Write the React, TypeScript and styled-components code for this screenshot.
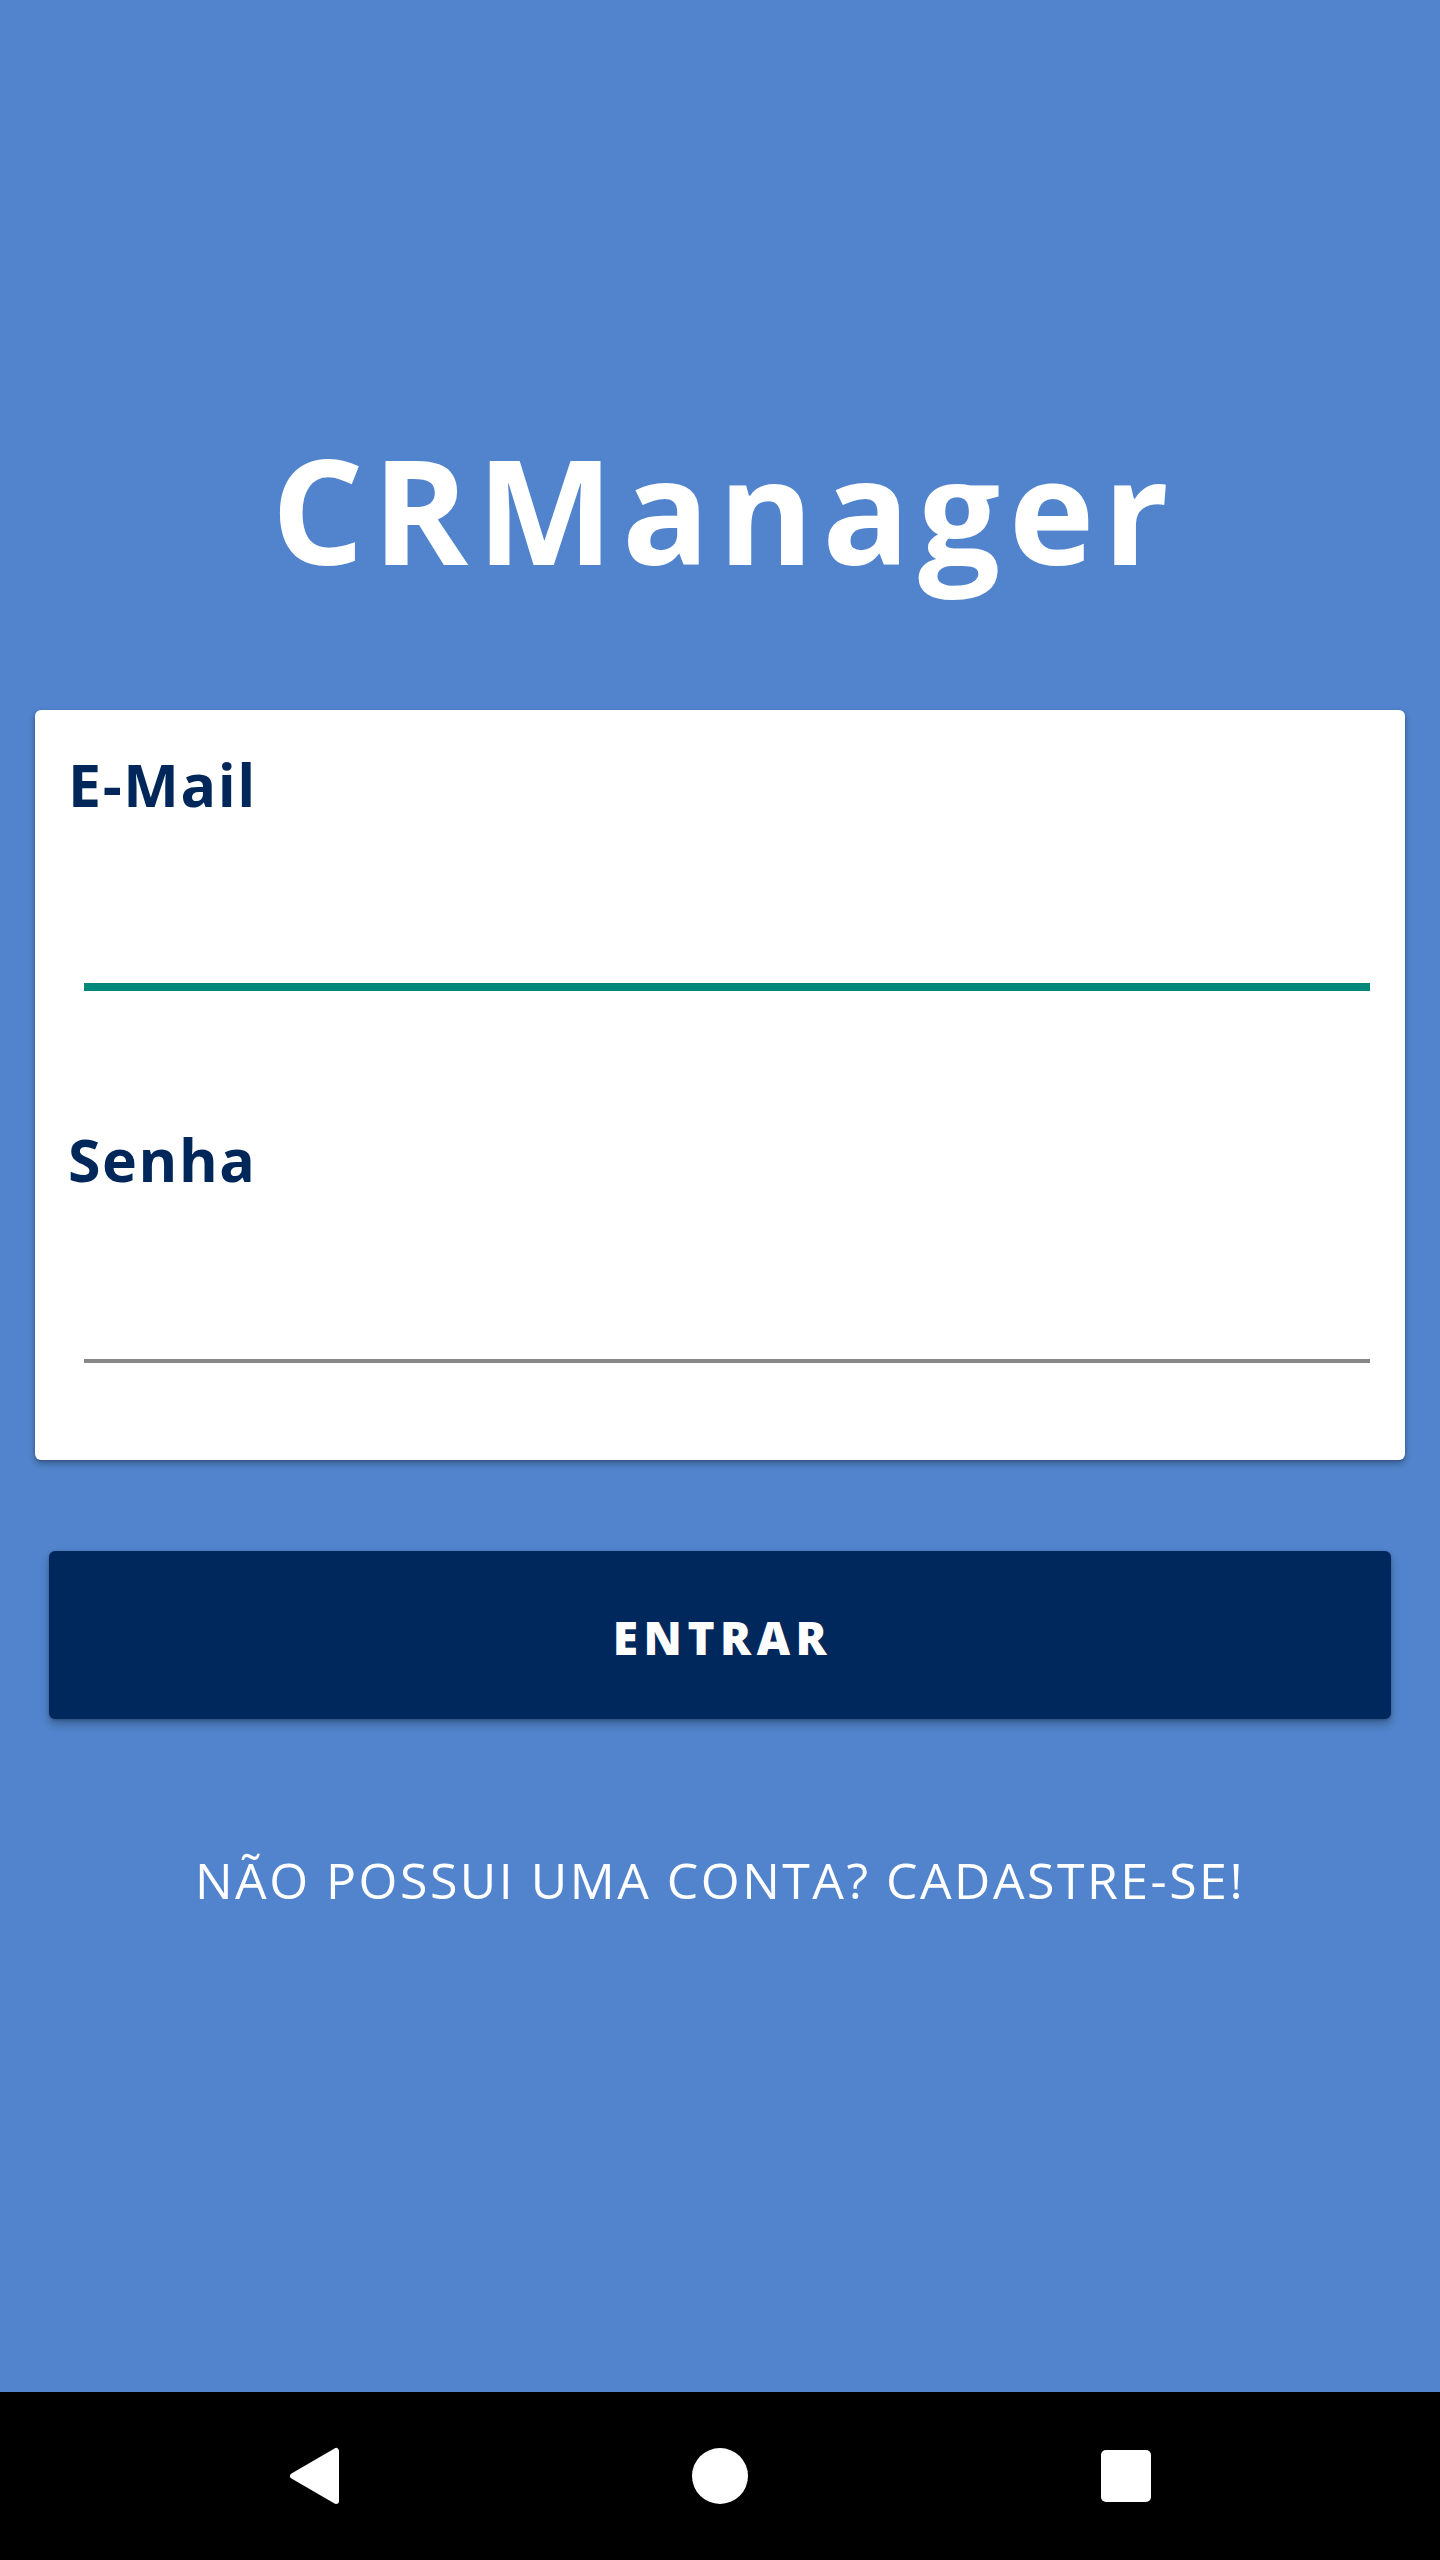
import React from "react";
import styled, { createGlobalStyle } from "styled-components";

const GlobalStyle = createGlobalStyle`
  html, body {
    margin: 0;
    padding: 0;
    background: #000;
  }
  body {
    font-family: "Open Sans", "Noto Sans", sans-serif;
  }
  * { box-sizing: border-box; }
`;

const Screen = styled.div`
  width: 1440px;
  min-height: 2560px;
  display: flex;
  flex-direction: column;
`;

const Main = styled.main`
  flex: 1;
  background: #5184cc;
  display: flex;
  flex-direction: column;
  padding-top: 437px;
`;

const Title = styled.h1`
  margin: 0;
  padding-left: 9px;
  font-family: "Open Sans", sans-serif;
  font-weight: 700;
  font-size: 145px;
  line-height: 144px;
  letter-spacing: 8.6px;
  color: #ffffff;
  text-align: center;
`;

const Card = styled.form`
  margin: 129px 35px 0 35px;
  padding: 45px 35px 97px 33px;
  background: #ffffff;
  border-radius: 6px;
  box-shadow: 0 4px 6px rgba(0, 0, 0, 0.28), 0 1px 3px rgba(0, 0, 0, 0.18);
  display: flex;
  flex-direction: column;
  gap: 139px;
`;

const Field = styled.label`
  display: flex;
  flex-direction: column;
`;

const LabelText = styled.span`
  font-family: "Open Sans", sans-serif;
  font-weight: 700;
  font-size: 59px;
  line-height: 59px;
  letter-spacing: 1.6px;
  color: #00275a;
`;

const Input = styled.input<{ $focused?: boolean }>`
  margin-left: 16px;
  height: ${(p) => (p.$focused ? "177px" : "174px")};
  border: none;
  border-bottom: ${(p) => (p.$focused ? "8px solid #00897b" : "4px solid #878787")};
  background: transparent;
  outline: none;
  font-family: "Open Sans", sans-serif;
  font-size: 52px;
  color: #222;
  padding: 0;
`;

const Button = styled.button`
  margin: 91px 49px 0 49px;
  height: 168px;
  border: none;
  border-radius: 6px;
  background: #00285c;
  box-shadow: 0 5px 8px rgba(0, 0, 0, 0.28), 0 1px 3px rgba(0, 0, 0, 0.2);
  color: #ffffff;
  font-family: "Open Sans", sans-serif;
  font-weight: 800;
  font-size: 46px;
  line-height: 46px;
  letter-spacing: 5.5px;
  padding: 3px 0 0 5px;
  display: flex;
  align-items: center;
  justify-content: center;
  cursor: pointer;
`;

const SignupLink = styled.a`
  margin-top: 136px;
  font-family: "Open Sans", sans-serif;
  font-weight: 400;
  font-size: 50px;
  line-height: 50px;
  letter-spacing: 2.5px;
  color: #ffffff;
  text-align: center;
  text-decoration: none;
  cursor: pointer;
`;

const NavBar = styled.nav`
  height: 168px;
  background: #000000;
  display: flex;
  align-items: center;
  justify-content: center;
  gap: 350px;
`;

const NavSlot = styled.div`
  width: 56px;
  height: 56px;
  display: flex;
  align-items: center;
  justify-content: center;
`;

const HomeDot = styled.div`
  width: 56px;
  height: 56px;
  border-radius: 50%;
  background: #ffffff;
`;

const RecentsSquare = styled.div`
  width: 50px;
  height: 52px;
  border-radius: 5px;
  background: #ffffff;
`;

const BackIcon = () => (
  <svg width="52" height="58" viewBox="0 0 52 58" aria-hidden="true">
    <path
      d="M48 4 L48 54 L5 29 Z"
      fill="#ffffff"
      stroke="#ffffff"
      strokeWidth="6"
      strokeLinejoin="round"
    />
  </svg>
);

export default function App() {
  return (
    <>
      <GlobalStyle />
      <Screen>
        <Main>
          <Title>CRManager</Title>
          <Card onSubmit={(e) => e.preventDefault()}>
            <Field>
              <LabelText>E-Mail</LabelText>
              <Input type="email" $focused />
            </Field>
            <Field>
              <LabelText>Senha</LabelText>
              <Input type="password" />
            </Field>
          </Card>
          <Button type="button">ENTRAR</Button>
          <SignupLink>NÃO POSSUI UMA CONTA? CADASTRE-SE!</SignupLink>
        </Main>
        <NavBar>
          <NavSlot>
            <BackIcon />
          </NavSlot>
          <NavSlot>
            <HomeDot />
          </NavSlot>
          <NavSlot>
            <RecentsSquare />
          </NavSlot>
        </NavBar>
      </Screen>
    </>
  );
}
